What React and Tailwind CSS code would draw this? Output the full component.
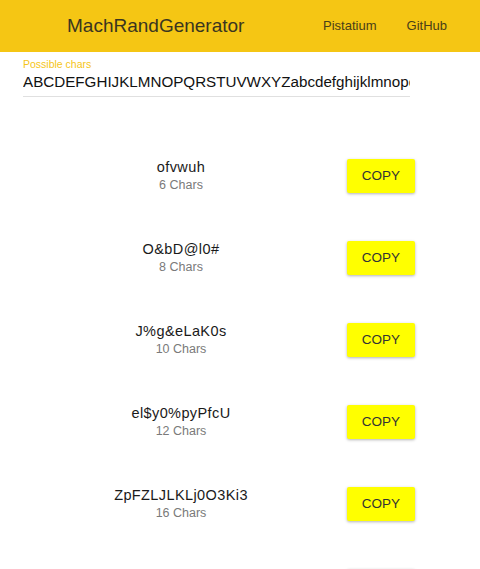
import React from "react";

const rows = [
  ["ofvwuh", "6 Chars"],
  ["O&bD@l0#", "8 Chars"],
  ["J%g&eLaK0s", "10 Chars"],
  ["el$y0%pyPfcU", "12 Chars"],
  ["ZpFZLJLKLj0O3Ki3", "16 Chars"],
  ["", ""],
];

export default function App() {
  return (
    <div className="w-[480px] h-[569px] overflow-hidden bg-white" style={{ fontFamily: '"Liberation Sans", Arial, sans-serif' }}>
      <header className="h-[52px] bg-[#f5c614] flex items-center">
        <div className="pl-[67px] text-[19px] text-[#3a3520] flex-1">MachRandGenerator</div>
        <div className="text-[13px] text-[#4a4018] mr-[30px]">Pistatium</div>
        <div className="text-[13px] text-[#4a4018] mr-[33px]">GitHub</div>
      </header>
      <div className="pl-[23px] pt-[5px]">
        <div className="text-[10.5px] leading-[14px] text-[#f5c518]">Possible chars</div>
        <div className="w-[387px] overflow-hidden whitespace-nowrap text-[15.2px] leading-[22px] text-[#111] border-b border-[#e0e0e0] pb-[3px]">
          ABCDEFGHIJKLMNOPQRSTUVWXYZabcdefghijklmnopq
        </div>
      </div>
      <div className="mt-[61px] flex flex-col">
        {rows.map(([v, c], i) => (
          <div key={i} className="h-[82px] flex items-start">
            <div className="w-[347px] pl-[15px] text-center h-[37px] flex flex-col justify-center">
              <div className="text-[14.5px] leading-[18px] text-[#1a1a1a] tracking-[0.4px]">{v}</div>
              <div className="text-[12.5px] leading-[19px] text-[#7a7a7a]">{c}</div>
            </div>
            <button className="mt-[1px] w-[68px] h-[34px] bg-[#ffff00] text-[13.5px] text-[#333] shadow-[0_1px_3px_rgba(0,0,0,0.3)] rounded-[2px]">
              {v ? "COPY" : ""}
            </button>
          </div>
        ))}
      </div>
    </div>
  );
}
